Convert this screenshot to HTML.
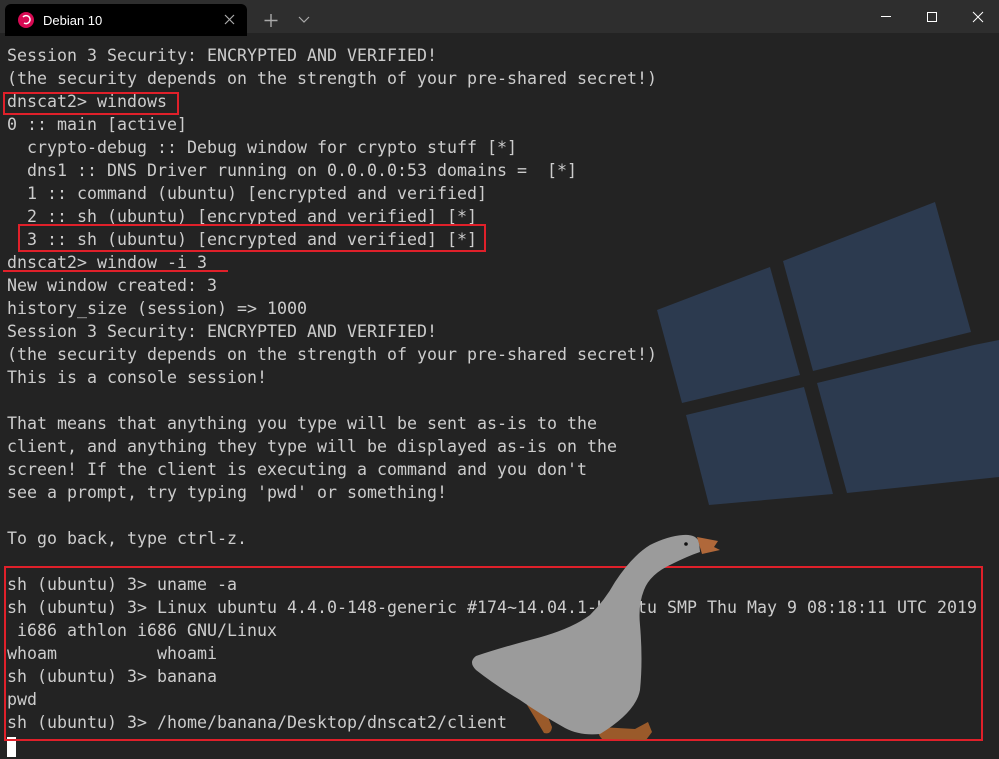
<!DOCTYPE html>
<html><head><meta charset="utf-8"><style>
html,body{margin:0;padding:0;}
body{width:999px;height:759px;background:#232323;position:relative;overflow:hidden;font-family:"Liberation Mono",monospace;}
#tb{position:absolute;left:0;top:0;width:999px;height:33px;background:#2e2e2e;}
#tab{position:absolute;left:5px;top:4px;width:242px;height:32px;background:#000;border-radius:6px 6px 0 0;}
#term{position:absolute;left:7px;top:44px;font-size:16.62px;line-height:23px;color:#cccccc;white-space:pre;margin:0;z-index:2;}
.box{position:absolute;border:2px solid #e0202a;z-index:3;}
svg{position:absolute;left:0;top:0;}
</style></head><body>
<div id="tb"></div>
<div id="tab"></div>
<svg width="999" height="759" style="z-index:1">
 <circle cx="26" cy="20" r="8" fill="#d70a53"/>
 <path d="M23 17a4 4 0 1 1 1 6" stroke="#fff" stroke-width="1.5" fill="none"/>
 <text x="43" y="25" fill="#fff" font-family="Liberation Sans,sans-serif" font-size="13">Debian 10</text>
 <path d="M225 15l9 9M234 15l-9 9" stroke="#aaa" stroke-width="1.2"/>
 <path d="M271 14v13M264.5 20.5h13" stroke="#aaa" stroke-width="1.4"/>
 <path d="M299 17l5 5 5-5" stroke="#aaa" stroke-width="1.2" fill="none"/>
 <path d="M881 16.5h10" stroke="#fff" stroke-width="1"/>
 <rect x="927.5" y="12.5" width="9" height="9" stroke="#fff" fill="none"/>
 <path d="M973 12l10 10M983 12l-10 10" stroke="#fff" stroke-width="1"/>
 <g fill="#2c3a4f">
  <polygon points="657,310 770,267 800,375 682,403"/>
  <polygon points="783,261 935,202 971,332 813,371"/>
  <polygon points="686,415 804,387 833,494 709,505"/>
  <polygon points="817,383 974,345 999,340 999,477 847,493"/>
 </g>
</svg>
<pre id="term">Session 3 Security: ENCRYPTED AND VERIFIED!
(the security depends on the strength of your pre-shared secret!)
dnscat2&gt; windows
0 :: main [active]
  crypto-debug :: Debug window for crypto stuff [*]
  dns1 :: DNS Driver running on 0.0.0.0:53 domains =  [*]
  1 :: command (ubuntu) [encrypted and verified]
  2 :: sh (ubuntu) [encrypted and verified] [*]
  3 :: sh (ubuntu) [encrypted and verified] [*]
dnscat2&gt; window -i 3
New window created: 3
history_size (session) =&gt; 1000
Session 3 Security: ENCRYPTED AND VERIFIED!
(the security depends on the strength of your pre-shared secret!)
This is a console session!

That means that anything you type will be sent as-is to the
client, and anything they type will be displayed as-is on the
screen! If the client is executing a command and you don't
see a prompt, try typing 'pwd' or something!

To go back, type ctrl-z.

sh (ubuntu) 3&gt; uname -a
sh (ubuntu) 3&gt; Linux ubuntu 4.4.0-148-generic #174~14.04.1-Ubuntu SMP Thu May 9 08:18:11 UTC 2019
 i686 athlon i686 GNU/Linux
whoam          whoami
sh (ubuntu) 3&gt; banana
pwd
sh (ubuntu) 3&gt; /home/banana/Desktop/dnscat2/client
</pre>
<div class="box" style="left:3px;top:92px;width:172px;height:19px"></div>
<div class="box" style="left:18px;top:224px;width:464px;height:24px"></div>
<div class="box" style="left:3px;top:270px;width:223px;height:0;border-width:1px"></div>
<div class="box" style="left:4px;top:566px;width:975px;height:171px"></div>
<div style="position:absolute;left:7px;top:737px;width:9px;height:20px;background:#fff"></div>
<svg width="999" height="759" style="z-index:4">
 <path d="M524 700 Q522 690 530 688 L538 690 Q543 705 552 727 Q551 735 544 733 Q535 718 524 700 Z" fill="#9a5a2a"/>
 <path d="M600 727 L635 729 L648 722 L652 732 L646 740 L602 739 Q596 733 600 727 Z" fill="#9a5a2a"/>
 <path d="M683 535 Q696 534 699 542 L700 552 Q688 556 672 564 Q650 574 644 590 Q638 605 640 625 Q643 660 640 690 Q636 712 600 734 Q580 736 565 728 Q540 714 520 700 Q495 685 476 670 Q468 662 476 656 Q500 648 530 640 Q570 630 590 615 Q605 600 615 582 Q632 556 650 545 Q668 536 683 535 Z" fill="#9b9b9b"/>
 <path d="M697 537 L718 541 L714 547 L720 550 L702 554 Z" fill="#b0683a"/>
 <circle cx="686" cy="544" r="1.8" fill="#111"/>
</svg>
</body></html>
